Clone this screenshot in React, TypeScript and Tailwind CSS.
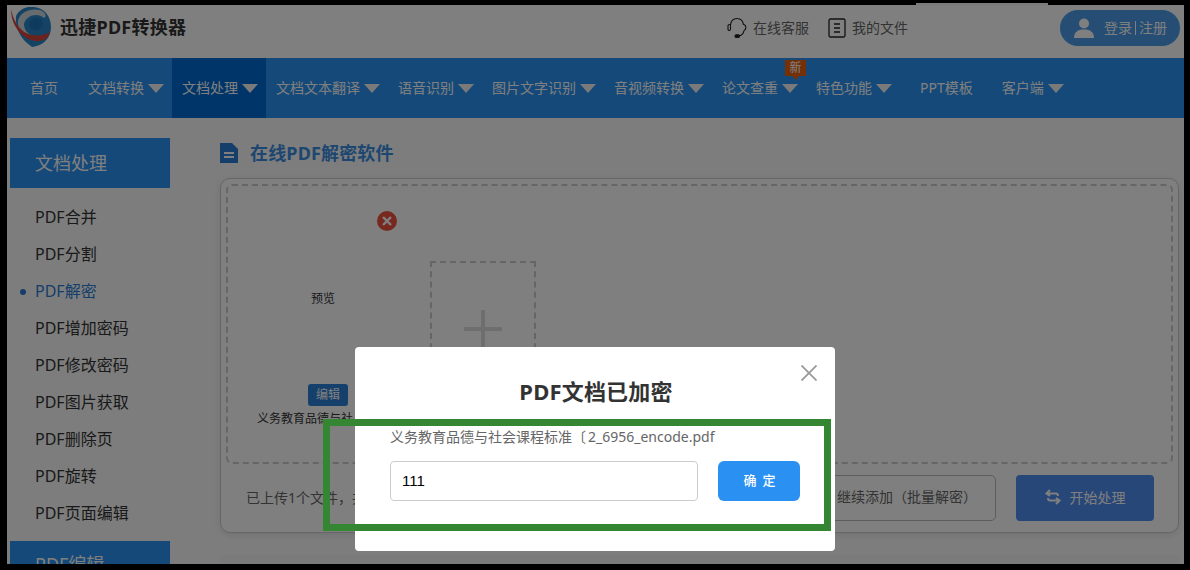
const cjk = "font-['Noto_Sans','Noto_Sans_CJK_SC',sans-serif]";

const navItems = [
  { label: '首页', caret: false, cls: 'pl-[10px] pr-[20px]' },
  { label: '文档转换', caret: true, cls: 'pl-[10px] pr-[8px]' },
  { label: '文档处理', caret: true, cls: 'pl-[10px] pr-[8px] bg-[#006bd2]' },
  { label: '文档文本翻译', caret: true, cls: 'pl-[10px] pr-[8px]' },
  { label: '语音识别', caret: true, cls: 'pl-[10px] pr-[8px]' },
  { label: '图片文字识别', caret: true, cls: 'pl-[10px] pr-[8px]' },
  { label: '音视频转换', caret: true, cls: 'pl-[10px] pr-[8px]' },
  { label: '论文查重', caret: true, cls: 'pl-[10px] pr-[8px]', badge: true },
  { label: '特色功能', caret: true, cls: 'pl-[10px] pr-[8px]' },
  { label: 'PPT模板', caret: false, cls: 'px-[20px]' },
  { label: '客户端', caret: true, cls: 'pl-[9px] pr-[8px]' },
];

const sideItems = ['PDF合并', 'PDF分割', 'PDF解密', 'PDF增加密码', 'PDF修改密码', 'PDF图片获取', 'PDF删除页', 'PDF旋转', 'PDF页面编辑'];

function Logo() {
  return (
    <svg width="42" height="42" viewBox="0 0 42 42" className="shrink-0">
      <path d="M6 9 C10 1 18 -1 24 0 C34 1 41 9 41 20 C41 31 33 39 22 40 L17 36 C10 30 5 20 6 9Z" fill="#2a86c8" />
      <path d="M8 14 C10 5 20 1 30 3 C36 5 37 10 34 11 C28 5 16 8 14 17 C14 22 17 26 21 28 C13 27 7 22 8 14Z" fill="#cfd6dc" />
      <ellipse cx="26" cy="17" rx="7" ry="6" fill="#1f78bd" transform="rotate(-20 26 17)" />
      <path d="M1 2 C3 13 10 26 22 28 C29 29 36 28 40 25 C39 30 35 34 29 34 C16 35 1 22 1 2Z" fill="#d8443a" />
    </svg>
  );
}

function Caret() {
  return <span className="ml-[4px] w-0 h-0 border-x-[8px] border-x-transparent border-t-[9px] border-t-[#f4f4f4]" />;
}

export default function App() {
  return (
    <div className={`relative w-[1190px] h-[570px] bg-black overflow-hidden ${cjk}`}>
      <div className="absolute left-[916px] top-[3px] w-[132px] h-[2px] bg-[#7a7a7a]" />
      <div className="ml-[7px] mt-[5px] w-[1177px] h-[559px] relative bg-[#fbfbfb] overflow-hidden inline-block align-top">
        <header className="h-[53px] pb-[8px] bg-white flex items-center">
          <div className="ml-[3px]"><Logo /></div>
          <span className="ml-[8px] text-[18px] tracking-[0.25px] font-bold text-[#333]">迅捷PDF转换器</span>
          <div className="ml-auto flex items-center text-[14px] text-[#666]">
            <svg width="22" height="22" viewBox="0 0 22 22" fill="none" stroke="#222" strokeWidth="1.1" className="mr-[5px]">
              <path d="M4.5 8 C5 3.5 8 1.5 11 1.5 C14.5 1.5 17 3.5 17.5 8" />
              <rect x="2" y="7.5" width="2.5" height="6" rx="1.2" />
              <path d="M18 7.5 C20.5 8.5 20.5 12.5 18 13.5" />
              <path d="M18 13.5 C17.5 17 15 18.5 13 19" />
              <rect x="9" y="17.8" width="4.5" height="2.6" rx="1.2" fill="#222" />
            </svg>
            <span>在线客服</span>
            <svg width="18" height="20" viewBox="0 0 18 20" fill="none" stroke="#222" strokeWidth="1.3" className="ml-[19px] mr-[6px]">
              <rect x="1" y="1" width="16" height="18" rx="1.5" />
              <path d="M6 6 H12 M6 10 H12 M6 14 H12" />
            </svg>
            <span>我的文件</span>
            <button className="ml-[152px] mr-[4px] w-[120px] h-[36px] rounded-full bg-[#4c9be8] flex items-center text-[14px] text-white">
              <svg width="20" height="20" viewBox="0 0 20 20" fill="#fff" className="ml-[14px] mr-[10px]">
                <circle cx="10" cy="5.5" r="5" />
                <path d="M0 20 C0 13 5 11.5 10 11.5 C15 11.5 20 13 20 20Z" />
              </svg>
              <span>登录</span>
              <span className="mx-[3px] w-px h-[14px] bg-white" />
              <span>注册</span>
            </button>
          </div>
        </header>

        <nav className="h-[60px] bg-[#2a93f3] flex pl-[13px] text-[14px] text-white">
          {navItems.map(item => (
            <div key={item.label} className={`relative flex items-center h-full ${item.cls}`}>
              <span className="mb-[1px]">{item.label}</span>
              {item.caret && <Caret />}
              {item.badge && (
                <span className="absolute left-[73px] top-[2px] w-[21px] h-[16px] bg-[#e8600f] text-[12px] leading-[16px] text-center">
                  新
                  <span className="absolute left-[7px] top-[16px] w-0 h-0 border-l-[4px] border-l-transparent border-r-[3px] border-r-transparent border-t-[4px] border-t-[#e8600f]" />
                </span>
              )}
            </div>
          ))}
        </nav>

        <div className="flex">
          <aside className="ml-[3px] w-[160px] pt-[20px] shrink-0">
            <div className="h-[50px] pl-[25px] bg-[#2a93f3] text-white text-[18px] leading-[50px]">文档处理</div>
            <ul className="mt-[11px] mb-[9px]">
              {sideItems.map(name => (
                <li key={name} className={`relative pl-[25px] h-[37px] leading-[37px] text-[16px] ${name === 'PDF解密' ? 'text-[#2a7ed4]' : 'text-[#333]'}`}>
                  {name === 'PDF解密' && <span className="absolute left-[10px] top-[16px] w-[6px] h-[6px] rounded-full bg-[#2a7ed4]" />}
                  {name}
                </li>
              ))}
            </ul>
            <div className="h-[50px] pl-[25px] bg-[#2a93f3] text-white text-[18px] leading-[46px]">PDF编辑</div>
          </aside>

          <main className="ml-[50px] w-[959px] shrink-0">
            <div className="h-[60px] flex items-center">
              <svg width="18" height="20" viewBox="0 0 18 20" className="mt-[10px]">
                <path d="M0 0 H12 L18 6 V20 H0Z" fill="#2a7ed4" />
                <path d="M4 10 H14 M4 14 H14" stroke="#fff" strokeWidth="2" />
              </svg>
              <h1 className="ml-[12px] mt-[10px] text-[18px] tracking-[0.15px] font-bold text-[#3a8ee0]">在线PDF解密软件</h1>
            </div>
            <div className="h-[355px] bg-white rounded-[10px] border border-[#ccc] shadow-[0_2px_8px_rgba(0,0,0,0.1)] p-[5px]">
              <div className="h-[280px] rounded-[6px] border-2 border-dashed border-[#ccc] flex">
                <div className="relative ml-[10px] w-[170px] pt-[27px] flex flex-col items-center text-[#333]">
                  <svg width="20" height="20" viewBox="0 0 20 20" className="absolute left-[139px] top-[25px]">
                    <circle cx="10" cy="10" r="10" fill="#f0523f" />
                    <path d="M6 6 L14 14 M14 6 L6 14" stroke="#fff" strokeWidth="2.4" />
                  </svg>
                  <div className="h-[171px] flex items-center text-[12px]">预览</div>
                  <span className="ml-[10px] w-[40px] h-[22px] rounded-[3px] bg-[#2a80d8] text-white text-[12px] leading-[22px] text-center">编辑</span>
                  <div className="w-[132px] h-[26px] leading-[26px] text-[12px] whitespace-nowrap">义务教育品德与社</div>
                </div>
                <div className="ml-[22px] mt-[75px] w-[106px] h-[150px] border-2 border-dashed border-[#ccc] flex items-start justify-center pt-[47px]">
                  <svg width="38" height="38" viewBox="0 0 38 38"><path d="M19 0 V38 M0 19 H38" stroke="#ddd" strokeWidth="4" /></svg>
                </div>
              </div>
              <div className="mt-[11px] flex items-center">
                <span className="ml-[20px] mb-[2px] text-[14px] text-[#666]">已上传1个文件，共1页</span>
                <button className="ml-auto w-[300px] h-[46px] pb-[3px] rounded-[5px] border border-[#bbb] text-[14px] text-[#666] text-right pr-[18px]">继续添加（批量解密）</button>
                <button className="ml-[20px] mr-[19px] w-[138px] h-[46px] pb-[2px] rounded-[4px] bg-[#508ef3] text-white text-[14px] flex items-center justify-center">
                  <svg width="16" height="16" viewBox="0 0 16 16" fill="none" stroke="#fff" strokeWidth="2" className="mr-[9px]">
                    <path d="M5 1 L1.5 4.5 L5 7 M2 4.5 H11 C12.5 4.5 13 5.5 13 7" />
                    <path d="M11 9 L14.5 11.5 L11 15 M14 11.5 H5 C3.5 11.5 3 10.5 3 9" />
                  </svg>
                  开始处理
                </button>
              </div>
            </div>
            <div className="mt-[22px] h-[40px] bg-[#f7f7f7]" />
          </main>
        </div>

        <div className="absolute inset-0 bg-black/50" />
      </div>

      <div className="absolute left-[355px] top-[347px] w-[480px] h-[204px] bg-white rounded-[4px]">
        <svg width="16" height="16" viewBox="0 0 16 16" className="absolute right-[18px] top-[18px]">
          <path d="M0.5 0.5 L15.5 15.5 M15.5 0.5 L0.5 15.5" stroke="#9a9a9a" strokeWidth="1.8" />
        </svg>
        <h2 className="pt-[28px] pl-[2px] text-center text-[22px] tracking-[0.2px] leading-[32px] font-bold text-[#333]">PDF文档已加密</h2>
        <p className="ml-[35px] mt-[20px] text-[14px] leading-[20px] text-[#666] whitespace-nowrap">义务教育品德与社会课程标准〔<span className="pl-[2px]">2_6956_encode.pdf</span></p>
        <div className="mt-[14px] ml-[35px] flex">
          <input readOnly value="111" className="w-[308px] h-[40px] pb-[2px] rounded-[4px] border border-[#ccc] px-[11px] text-[15px] text-black font-['Liberation_Sans',sans-serif] outline-none" />
          <button className="ml-[20px] w-[82px] h-[40px] pl-[7px] rounded-[6px] bg-[#2a91f3] text-white text-[13px] font-medium tracking-[6px]">确定</button>
        </div>
      </div>

      <div className="absolute left-[323px] top-[419px] w-[508px] h-[112px] border-[7px] border-[#348632]" />
    </div>
  );
}
